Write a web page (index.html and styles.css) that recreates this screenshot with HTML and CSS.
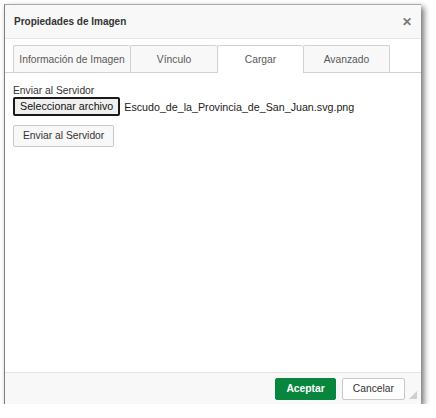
FILE: index.html
```html
<!DOCTYPE html>
<html lang="es">
<head>
<meta charset="utf-8">
<title>Propiedades de Imagen</title>
<link rel="stylesheet" href="styles.css">
</head>
<body>
<div class="dialog">
  <div class="titlebar">
    <span class="title">Propiedades de Imagen</span>
    <span class="close">&#x2715;</span>
  </div>
  <div class="tabs">
    <div class="tab t1">Información de Imagen</div>
    <div class="tab t2">Vínculo</div>
    <div class="tab t3 active">Cargar</div>
    <div class="tab t4">Avanzado</div>
  </div>
  <div class="content">
    <div class="label">Enviar al Servidor</div>
    <div class="filerow">
      <span class="filebtn">Seleccionar archivo</span>
      <span class="filename">Escudo_de_la_Provincia_de_San_Juan.svg.png</span>
    </div>
    <div class="sendbtn">Enviar al Servidor</div>
  </div>
  <div class="footer">
    <span class="btn ok">Aceptar</span>
    <span class="btn cancel">Cancelar</span>
    <span class="grip"></span>
  </div>
</div>
</body>
</html>
```
FILE: styles.css
```css
html, body {
  margin: 0;
  padding: 0;
  background: #ffffff;
}
body {
  font-family: "Liberation Sans", Arial, sans-serif;
  font-size: 10.3px;
  color: #333333;
}
.dialog {
  margin: 4px 0 0 4px;
  width: 416px;
  height: 399px;
  border-top: 1px solid #a8a8a8;
  border-left: 1px solid #7f7f7f;
  background: #ffffff;
  box-shadow: 3px 3px 6px rgba(0,0,0,0.55);
  display: flex;
  flex-direction: column;
}
.titlebar {
  height: 33px;
  border-bottom: 1px solid #e5e5e5;
  background: #f8f8f8;
  display: flex;
  align-items: center;
  justify-content: space-between;
  padding: 0 9px 0 9px;
}
.title {
  font-weight: bold;
  font-size: 10px;
  color: #333;
}
.close {
  font-size: 12px;
  font-weight: bold;
  color: #777;
}
.tabs {
  display: flex;
  padding: 6px 0 0 8px;
  border-bottom: 1px solid #d1d1d1;
  background: #ffffff;
}
.tab {
  height: 26px;
  border: 1px solid #d1d1d1;
  border-bottom: none;
  border-right: none;
  background: #f8f8f8;
  color: #595959;
  display: flex;
  align-items: center;
  justify-content: center;
  border-radius: 2px 2px 0 0;
}
.tab.t4 { border-right: 1px solid #d1d1d1; }
.t1 { width: 116px; }
.t2 { width: 86px; }
.t3 { width: 85px; }
.t4 { width: 85px; }
.tab.active {
  background: #ffffff;
  color: #595959;
  margin-bottom: -1px;
  height: 27px;
}
.content {
  flex: 1;
  padding: 11px 8px 0 8px;
}
.label {
  line-height: 13px;
}
.filerow {
  display: flex;
  align-items: center;
  margin-top: 0;
  font-size: 10.7px;
}
.filebtn {
  border: 2px solid #1a1a1a;
  border-radius: 2px;
  background: #efefef;
  padding: 1px 5px;
  line-height: 13px;
  color: #111;
}
.filename {
  margin-left: 4px;
  color: #222;
}
.sendbtn {
  display: inline-block;
  margin-top: 9px;
  border: 1px solid #c9c9c9;
  border-radius: 2px;
  background: #f8f8f8;
  padding: 0 9px;
  line-height: 20px;
  color: #333;
}
.footer {
  height: 31px;
  border-top: 1px solid #e5e5e5;
  background: #f8f8f8;
  display: flex;
  align-items: center;
  justify-content: flex-end;
  padding-right: 16px;
  gap: 6px;
  position: relative;
}
.btn {
  height: 20px;
  line-height: 20px;
  border: 1px solid #c9c9c9;
  border-radius: 2px;
  padding: 0 10px;
}
.ok {
  background: #09863e;
  border-color: #09863e;
  color: #ffffff;
  font-weight: bold;
}
.cancel {
  background: #ffffff;
  color: #333;
}
.grip {
  position: absolute;
  right: 4px;
  bottom: 5px;
  width: 0;
  height: 0;
  border-left: 8px solid transparent;
  border-bottom: 8px solid #cfcfcf;
}
```
